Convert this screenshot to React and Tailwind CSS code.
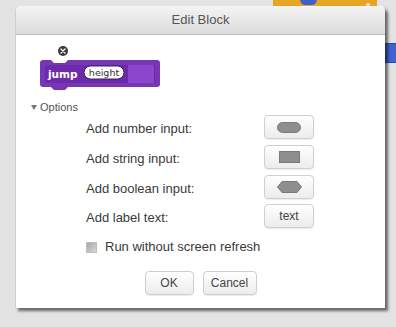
import React from "react";

function Btn({ className = "", children }) {
  return (
    <div
      className={
        "flex items-center justify-center rounded-[4px] border border-[#cfcfcf] bg-gradient-to-b from-[#ffffff] to-[#ececec] shadow-[0_1px_1px_rgba(0,0,0,0.08)] " +
        className
      }
    >
      {children}
    </div>
  );
}

function Row({ label, children, className = "" }) {
  return (
    <div className={"flex items-center h-[24px] pl-[70px] " + className}>
      <div className="w-[178px] text-[13px] leading-[16px] pt-[3px] text-[#3a3a3a]">{label}</div>
      <Btn className="w-[50px] h-[24px]">{children}</Btn>
    </div>
  );
}

function BlockSvg() {
  return (
    <svg width="126" height="47" viewBox="0 0 126 47" className="block">
      <circle cx="23" cy="7" r="5" fill="#3a3a3a" />
      <path d="M21 5 L25 9 M25 5 L21 9" stroke="#fff" strokeWidth="1.3" strokeLinecap="round" />
      <path
        d="M0,19 Q0,16 3,16 L11,16 L14,19 L25,19 L28,16 L117,16 Q120,16 120,19 L120,40 Q120,43 117,43 L28,43 L25,46 L14,46 L11,43 L3,43 Q0,43 0,40 Z"
        fill="#7636b6"
      />
      <rect x="5" y="21" width="110" height="18" fill="#6d2ba9" />
      <rect x="88" y="21" width="26" height="18" fill="#8b46cd" />
      <text
        x="8"
        y="34"
        fill="#ffffff"
        fontSize="10.5"
        fontWeight="700"
        fontFamily="'DejaVu Sans', 'Liberation Sans', sans-serif"
      >
        jump
      </text>
      <rect x="44" y="22" width="40" height="13" rx="6.5" fill="#ffffff" stroke="#3a1f5a" strokeWidth="1" />
      <text
        x="64"
        y="32"
        textAnchor="middle"
        fill="#333"
        fontSize="9.5"
        fontFamily="'DejaVu Sans', 'Liberation Sans', sans-serif"
      >
        height
      </text>
    </svg>
  );
}

export default function App() {
  return (
    <div
      className="relative w-[396px] h-[327px] overflow-hidden bg-[#e3e3e3]"
      style={{ fontFamily: "'Liberation Sans', Arial, sans-serif" }}
    >
      {/* background canvas blocks */}
      <div className="absolute left-[273px] top-[-4px] w-[104px] h-[11px] rounded-[3px] bg-[#e8a424] border-b border-[#c98a14]" />
      <div className="absolute left-[300px] top-[-6px] w-[17px] h-[11px] rounded-full bg-[#3d5fd0]" />
      <div className="absolute left-[366px] top-[3px] w-[4px] h-[4px] rounded-full bg-[#f7e3b0]" />
      <div className="absolute left-[378px] top-[43px] w-[26px] h-[20px] rounded-[8px] bg-[#3f63d2] border border-[#2c4aa8]" />

      {/* dialog */}
      <div className="absolute left-[15px] top-[6px] w-[370px] h-[302px] flex flex-col bg-white rounded-t-[5px] border-l border-[#cfcfcf] shadow-[3px_3px_3px_rgba(0,0,0,0.55)]">
        <div className="h-[29px] shrink-0 flex items-center justify-center rounded-t-[5px] bg-gradient-to-b from-[#f4f4f4] to-[#dbdbdb] border-b border-[#bdbdbd] text-[13px] text-[#555]">
          Edit Block
        </div>

        <div className="ml-[24px] mt-[9px]">
          <BlockSvg />
        </div>

        <div className="mt-[9px] h-[14px] flex items-center ml-[15px] text-[11px] text-[#555]">
          <svg width="6" height="5" viewBox="0 0 6 5" className="mr-[3px]">
            <path d="M0 0 L6 0 L3 5 Z" fill="#777" />
          </svg>
          Options
        </div>

        <Row label="Add number input:" className="mt-[1px]">
          <div className="w-[24px] h-[11px] rounded-full bg-[#8e8e8e] border border-[#7a7a7a]" />
        </Row>
        <Row label="Add string input:" className="mt-[6px]">
          <div className="w-[21px] h-[12px] bg-[#8e8e8e] border border-[#7a7a7a]" />
        </Row>
        <Row label="Add boolean input:" className="mt-[6px]">
          <svg width="25" height="12" viewBox="0 0 25 12">
            <path d="M0.5 6 L5 0.5 L20 0.5 L24.5 6 L20 11.5 L5 11.5 Z" fill="#8e8e8e" stroke="#7a7a7a" />
          </svg>
        </Row>
        <Row label="Add label text:" className="mt-[5px]">
          <span className="text-[12px] text-[#444]">text</span>
        </Row>

        <div className="mt-[12px] h-[14px] flex items-center pl-[70px]">
          <div className="w-[11px] h-[11px] bg-gradient-to-br from-[#a8a8a8] to-[#d6d6d6] border border-[#bdbdbd]" />
          <span className="ml-[8px] text-[13px] text-[#3a3a3a]">Run without screen refresh</span>
        </div>

        <div className="mt-[17px] flex justify-center gap-[9px]">
          <Btn className="w-[49px] h-[24px] text-[12px] text-[#444]">OK</Btn>
          <Btn className="w-[54px] h-[24px] text-[12px] text-[#444]">Cancel</Btn>
        </div>
      </div>
    </div>
  );
}
